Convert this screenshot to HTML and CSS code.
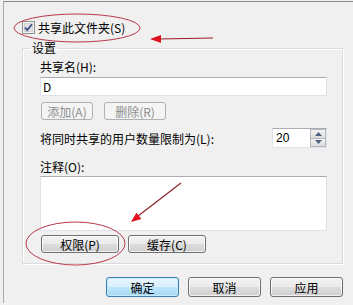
FILE: index.html
```html
<!DOCTYPE html>
<html lang="zh-CN">
<head>
<meta charset="utf-8">
<title>高级共享</title>
<link rel="stylesheet" href="styles.css">
</head>
<body>
<div class="dialog">
  <div class="share-row">
    <span class="check">
      <svg width="13" height="13" viewBox="0 0 13 13">
        <rect x="0.5" y="0.5" width="12" height="12" fill="#f4f4f4" stroke="#8e8f8f"/>
        <rect x="2.5" y="2.5" width="8" height="8" fill="#e1e3e6" stroke="#d0d2d6"/>
        <path d="M3 6.5 L5.2 9 L10 3.2" fill="none" stroke="#3b4d86" stroke-width="1.8"/>
      </svg>
    </span>
    <span class="share-text">共享此文件夹(S)</span>
  </div>
  <fieldset class="group">
    <legend class="group-title">设置</legend>
    <div class="group-body">
      <div class="label">共享名(H):</div>
      <div class="textbox">D</div>
      <div class="btn-row small-row">
        <button class="btn disabled add">添加(A)</button>
        <button class="btn disabled del">删除(R)</button>
      </div>
      <div class="limit-row">
        <span class="limit-text">将同时共享的用户数量限制为(L):</span>
        <div class="spin">
          <span class="spin-val">20</span>
          <span class="spin-btns">
            <span class="spin-up"><svg width="7" height="4" viewBox="0 0 7 4"><path d="M0 4 L3.5 0 L7 4 Z" fill="#4d6185"/></svg></span>
            <span class="spin-down"><svg width="7" height="4" viewBox="0 0 7 4"><path d="M0 0 L3.5 4 L7 0 Z" fill="#4d6185"/></svg></span>
          </span>
        </div>
      </div>
      <div class="label note-label">注释(O):</div>
      <div class="textarea"></div>
      <div class="btn-row big-row">
        <button class="btn wide">权限(P)</button>
        <button class="btn wide">缓存(C)</button>
      </div>
    </div>
  </fieldset>
  <div class="dialog-buttons">
    <button class="btn dlg default">确定</button>
    <button class="btn dlg">取消</button>
    <button class="btn dlg">应用</button>
  </div>
</div>
<svg class="annot" width="353" height="305" viewBox="0 0 353 305">
  <ellipse cx="77" cy="28" rx="63" ry="14" fill="none" stroke="#b8384c" stroke-width="1"/>
  <line x1="159" y1="39" x2="213" y2="38" stroke="#9c1c24" stroke-width="1.2"/>
  <polygon points="150,39 161,35 161,43" fill="#e0101c"/>
  <line x1="181" y1="183" x2="138" y2="216" stroke="#8c1c24" stroke-width="1.1"/>
  <polygon points="131,222 141.4,219 136.4,212.7" fill="#e0101c"/>
  <ellipse cx="75.5" cy="243.5" rx="49.5" ry="21.5" fill="none" stroke="#b8384c" stroke-width="1"/>
</svg>
</body>
</html>
```

FILE: styles.css
```css
html, body {
  margin: 0;
  padding: 0;
  background: #f0f0f0;
}
body {
  width: 353px;
  height: 305px;
  overflow: hidden;
  font-family: "Noto Sans CJK SC", "Liberation Sans", sans-serif;
  font-size: 12px;
  color: #000;
}
.dialog {
  margin: 1px 0 0 3px;
  border-top: 1px solid #8a8a8a;
  border-left: 1px solid #a8a8a8;
  height: 302px;
  padding: 18px 10px 0 18px;
  box-sizing: border-box;
}
.share-row {
  display: flex;
  align-items: center;
  height: 15px;
  line-height: 15px;
}
.check {
  width: 13px;
  height: 13px;
  display: flex;
}
.share-text {
  margin-left: 3px;
}
.group {
  margin: 6px 0 0 0;
  padding: 0;
  width: 321px;
  box-sizing: border-box;
  border: 1px solid #d8dcdf;
  box-shadow: inset 1px 1px 0 #ffffff, 1px 1px 0 #ffffff;
  min-inline-size: 0;
}
.group-title {
  margin-left: 7px;
  padding: 0 2px;
  line-height: 14px;
  height: 14px;
}
.group-body {
  padding: 5px 15px 10px 17px;
}
.label {
  line-height: 14px;
  height: 14px;
}
.textbox {
  margin-top: 3px;
  height: 19px;
  box-sizing: border-box;
  background: #fff;
  border: 1px solid #dfe2e8;
  border-top-color: #abadb3;
  padding-left: 2px;
  line-height: 17px;
}
.btn {
  font-family: inherit;
  font-size: 12px;
  color: #000;
  padding: 0;
  margin: 0;
  display: flex;
  align-items: center;
  justify-content: center;
  box-sizing: border-box;
  border: 1px solid #707070;
  border-radius: 3px;
  background: linear-gradient(#f2f2f2 0%, #ebebeb 50%, #dddddd 51%, #cfcfcf 100%);
  box-shadow: inset 0 0 0 1px rgba(255,255,255,0.7);
}
.btn-row {
  display: flex;
  margin-left: 1px;
}
.small-row {
  margin-top: 6px;
  gap: 11px;
}
.small-row .btn {
  height: 18px;
}
.btn.disabled {
  color: #8d8d8d;
  border-color: #adb2b5;
  background: #f4f4f4;
  box-shadow: none;
}
.add { width: 52px; }
.del { width: 62px; }
.limit-row {
  margin-top: 8px;
  height: 20px;
  display: flex;
  align-items: center;
  justify-content: space-between;
}
.spin {
  width: 55px;
  height: 20px;
  display: flex;
  box-sizing: border-box;
  background: #fff;
  border: 1px solid #dfe2e8;
  border-top-color: #abadb3;
}
.spin-val {
  flex: 1;
  padding-left: 3px;
  line-height: 18px;
  font-family: "Liberation Sans", sans-serif;
  font-size: 12px;
}
.spin-btns {
  width: 16px;
  display: flex;
  flex-direction: column;
}
.spin-up, .spin-down {
  flex: 1;
  display: flex;
  align-items: center;
  justify-content: center;
  box-sizing: border-box;
  border: 1px solid #b4b8c0;
  background: linear-gradient(#f4f4f4, #dcdcdc);
}
.spin-down {
  border-top: none;
}
.note-label {
  margin-top: 12px;
}
.textarea {
  margin-top: 2px;
  height: 55px;
  box-sizing: border-box;
  background: #fff;
  border: 1px solid #dfe2e8;
  border-top-color: #abadb3;
}
.big-row {
  margin-top: 4px;
  gap: 9px;
}
.wide {
  width: 78px;
  height: 18px;
}
.dialog-buttons {
  margin-top: 13px;
  width: 321px;
  display: flex;
  justify-content: flex-end;
  gap: 9px;
}
.dlg {
  width: 73px;
  height: 20px;
}
.btn.default {
  border-color: #3c7fb1;
  background: linear-gradient(#eaf6fd 0%, #d9f0fc 50%, #bee6fd 51%, #a7d9f5 100%);
  box-shadow: inset 0 0 0 1px #c6ecfc;
}
.annot {
  position: absolute;
  left: 0;
  top: 0;
  pointer-events: none;
}
```
